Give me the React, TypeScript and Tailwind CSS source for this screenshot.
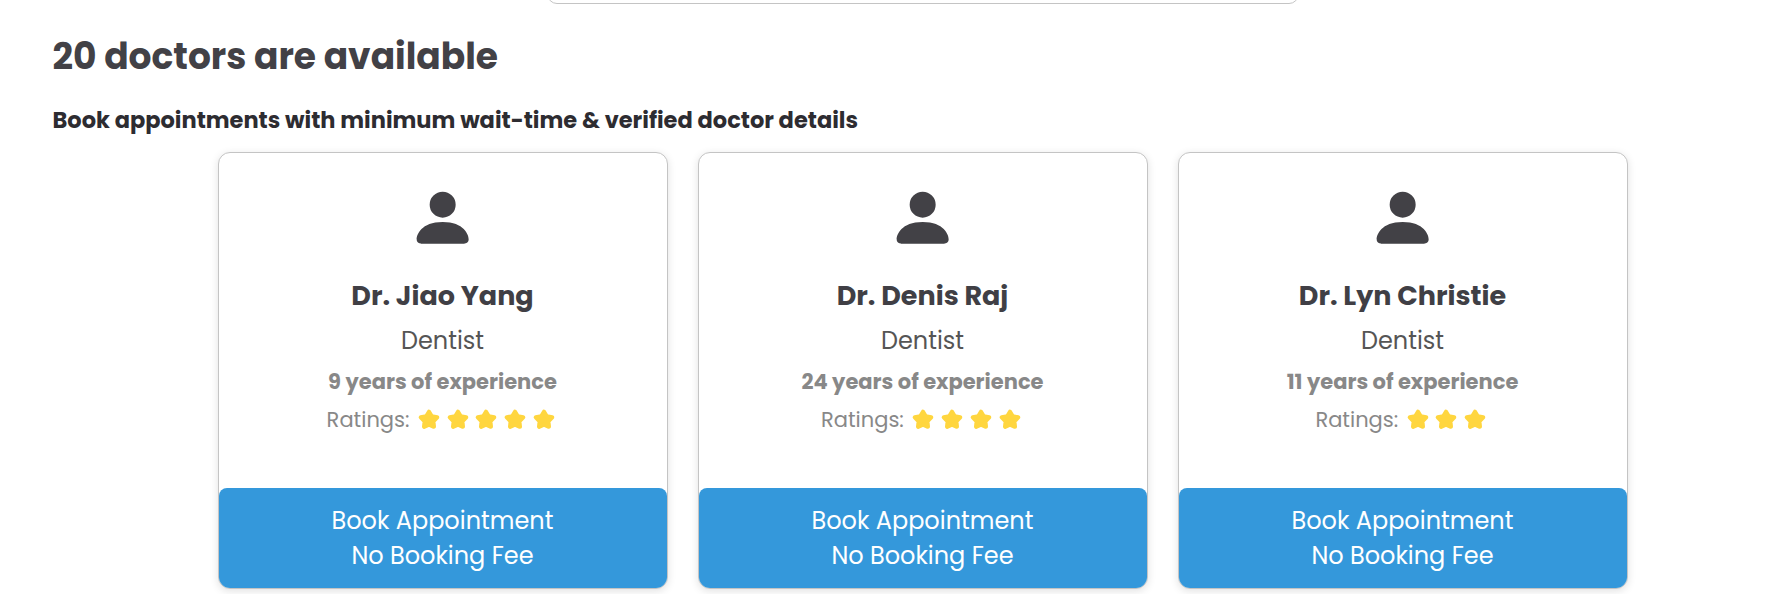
import React from "react";
import { BsPersonFill } from "react-icons/bs";

type Doctor = {
  name: string;
  specialty: string;
  years: number;
  rating: number;
};

const doctors: Doctor[] = [
  { name: "Dr. Jiao Yang", specialty: "Dentist", years: 9, rating: 5 },
  { name: "Dr. Denis Raj", specialty: "Dentist", years: 24, rating: 4 },
  { name: "Dr. Lyn Christie", specialty: "Dentist", years: 11, rating: 3 },
];

function Star() {
  return (
    <svg viewBox="-12 -13 24 24" className="mx-[2.4px] size-6 text-[#ffd63f]" fill="currentColor" stroke="currentColor" strokeWidth="4.2" strokeLinejoin="round">
      <path d="M0 -8.3L2.7 -3.7L8.2 -2.65L4.37 1.4L4.9 6.75L0 4.6L-4.9 6.75L-4.37 1.4L-8.2 -2.65L-2.7 -3.7Z" />
    </svg>
  );
}

function DoctorCard({ doctor }: { doctor: Doctor }) {
  return (
    <article className="flex h-[437px] w-[450px] flex-col justify-between rounded-[12px] border border-[#c4c4c4] bg-white text-center shadow-[0_2px_8px_rgba(0,0,0,0.12)]">
      <div className="flex flex-col items-center pt-[30px] pr-px">
        <BsPersonFill size={69.33} className="text-[#424146]" />
        <h3 className="mt-[24.67px] text-[27px] leading-[37px] font-bold text-[#403f45]">{doctor.name}</h3>
        <p className="mt-[9px] text-[24px] leading-[35px] text-[#555555]">{doctor.specialty}</p>
        <p className="mt-2 text-[21px] leading-[31px] font-bold text-[#888888]">{doctor.years} years of experience</p>
        <div className="mt-[7px] flex items-center">
          <span className="mr-[5px] text-[21px] leading-[31px] text-[#888888]">Ratings:</span>
          {Array.from({ length: doctor.rating }, (_, i) => (
            <Star key={i} />
          ))}
        </div>
      </div>
      <button className="h-[100px] rounded-t-[8px] rounded-b-[11px] bg-[#3498db] pr-px text-[24px] leading-[35px] text-white">
        <span className="block">Book Appointment</span>
        <span className="block">No Booking Fee</span>
      </button>
    </article>
  );
}

export default function App() {
  return (
    <div className="h-[594px] overflow-hidden bg-white font-['Poppins','Inter',sans-serif]">
      <div className="ml-[547px] h-1 w-[752px] overflow-hidden">
        <div className="-mt-9 h-10 rounded-[10px] border border-[#c4c4c4]" />
      </div>
      <main className="pt-[23px] pl-[52.5px]">
        <h1 className="text-[36px] leading-[59px] font-bold text-[#424146]">20 doctors are available</h1>
        <h2 className="mt-[17px] text-[22.5px] leading-[34px] font-bold text-[#2d2c31]">
          Book appointments with minimum wait-time &amp; verified doctor details
        </h2>
        <section className="mt-[15px] ml-[165.5px] flex gap-[30px]">
          {doctors.map((doctor) => (
            <DoctorCard key={doctor.name} doctor={doctor} />
          ))}
        </section>
      </main>
    </div>
  );
}
